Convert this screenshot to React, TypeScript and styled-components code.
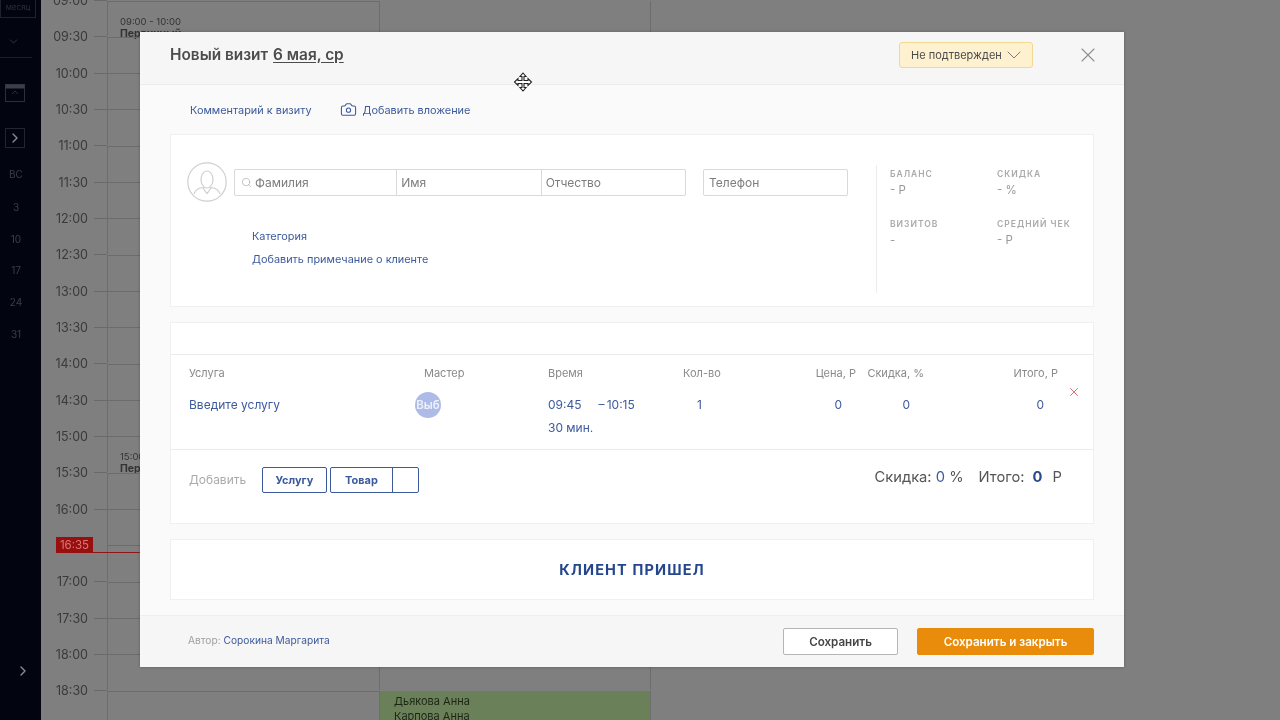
import React from "react";
import styled, { createGlobalStyle } from "styled-components";
import { Camera, ChevronDown, ChevronRight, Search, X } from "lucide-react";

const FONT = `"Inter", "Noto Sans", "Liberation Sans", sans-serif`;
const BLUE = "#3d5a9c";

const GlobalStyle = createGlobalStyle`
    html, body {
        margin: 0;
        padding: 0;
        height: 100%;
        background: #7f7f7f;
    }
    * {
        box-sizing: border-box;
    }
`;

const Page = styled.div`
    position: relative;
    display: flex;
    width: 1280px;
    height: 720px;
    overflow: hidden;
    background: #7f7f7f;
    font-family: ${FONT};
    filter: blur(0.35px);
`;

/* dimmed sidebar */
const Sidebar = styled.aside`
    width: 41px;
    flex: none;
    height: 100%;
    display: flex;
    flex-direction: column;
    align-items: center;
    padding-right: 9px;
    background: #02040f;
    color: #3c3f49;
    font-size: 10px;
`;

const ViewBox = styled.div`
    width: 36px;
    height: 18px;
    flex: none;
    align-self: flex-start;
    border: 1px solid #1f222c;
    border-top: none;
    font-size: 8px;
    line-height: 14px;
    text-align: center;
    color: #2c2f39;
`;

const ViewToggle = styled.div`
    width: 32px;
    height: 40px;
    flex: none;
    display: flex;
    justify-content: center;
    padding: 17px 6px 0 0;
    border-bottom: 1px solid #1c1f29;
    color: #3c3f49;
`;

const CalendarGlyph = styled.svg`
    width: 20px;
    height: 18px;
    flex: none;
    margin: 26px 3px 0 0;
`;

const IconBox = styled.div`
    width: 20px;
    height: 20px;
    flex: none;
    margin: 26px 3px 0 0;
    display: flex;
    align-items: center;
    justify-content: center;
    border: 1px solid #23262f;
    color: #8a8c93;
`;

const DayLabel = styled.div<{ $top: number }>`
    height: 14px;
    line-height: 14px;
    margin-top: ${(p) => p.$top}px;
`;

const SidebarFoot = styled.div`
    margin-top: auto;
    margin-left: 14px;
    padding-bottom: 41px;
    height: 57px;
    color: #8a8c93;
`;

/* dimmed calendar behind the modal */
const CalendarGrid = styled.main`
    flex: 1;
    height: 100%;
`;

const Row = styled.div`
    display: grid;
    grid-template-columns: 66px 272px 272px;
    height: 36.33px;
    padding-top: 0.5px;
`;

const TimeCell = styled.div`
    position: relative;
`;

const TimeLabel = styled.div`
    display: flex;
    align-items: center;
    justify-content: flex-end;
    gap: 6px;
    height: 16px;
    transform: translateY(-50%);
    font-size: 12.5px;
    color: #3a3a3a;

    &::after {
        content: "";
        width: 13px;
        height: 1px;
        background: #696969;
    }
`;

const Cell = styled.div<{ $lined?: boolean }>`
    position: relative;
    border-left: 1px solid #6c6c6c;
    border-top: ${(p) => (p.$lined ? "1px solid #6c6c6c" : "none")};
`;

const LastCell = styled(Cell)`
    border-right: 1px solid #6c6c6c;
`;

const NowBadge = styled.div`
    position: absolute;
    left: 15px;
    top: -8px;
    width: 37px;
    height: 16px;
    display: flex;
    align-items: center;
    justify-content: center;
    background: #980f0f;
    color: #d77;
    font-size: 11.5px;
    z-index: 2;
`;

const NowLine = styled.div`
    position: absolute;
    left: 52px;
    top: 6.5px;
    width: 47px;
    height: 1px;
    background: #8f1616;
    z-index: 2;
`;

const EventBlock = styled.div`
    position: absolute;
    left: 12px;
    top: 14px;
    color: #333;
    font-size: 9.5px;
    line-height: 12px;

    b {
        display: block;
        font-size: 10.5px;
    }
`;

const GreenEvent = styled.div`
    position: absolute;
    left: 0;
    right: 0;
    top: 0;
    height: 36px;
    padding: 3px 14px;
    background: #6a8059;
    color: #1d2615;
    font-size: 11px;
    line-height: 15px;
`;

/* modal */
const Modal = styled.section`
    position: absolute;
    left: 140px;
    top: 32px;
    width: 984px;
    height: 635px;
    display: flex;
    flex-direction: column;
    background: #fafafa;
    box-shadow: 0 0 3px rgba(0, 0, 0, 0.25);
`;

const Header = styled.header`
    height: 53px;
    flex: none;
    display: flex;
    align-items: center;
    padding: 0 24px 7px 30px;
    background: #f6f6f6;
    border-bottom: 1px solid #ececec;
`;

const Title = styled.h2`
    margin: 0;
    flex: 1;
    font-size: 15.4px;
    font-weight: 600;
    color: #4c4c4c;

    u {
        margin-left: 1px;
        text-underline-offset: 2px;
    }
`;

const StatusButton = styled.button`
    width: 134px;
    height: 26px;
    margin-right: 43px;
    padding: 0 6px 0 11px;
    display: flex;
    align-items: center;
    justify-content: space-between;
    white-space: nowrap;
    background: #fdf1d0;
    border: 1px solid #f3d891;
    border-radius: 3px;
    font-family: inherit;
    font-size: 11px;
    color: #4b4b4b;
`;

const CloseButton = styled.div`
    display: flex;
    color: #8f8f8f;
`;

const Body = styled.div`
    flex: 1;
    padding: 0 30px;
`;

const LinksBar = styled.div`
    height: 49px;
    display: flex;
    align-items: center;
    gap: 28px;
    padding-left: 20px;
`;

const TextLink = styled.a`
    display: inline-flex;
    align-items: center;
    gap: 6px;
    font-size: 10.9px;
    color: ${BLUE};
`;

const Card = styled.div<{ $height: number }>`
    height: ${(p) => p.$height}px;
    margin-bottom: 15px;
    background: #fff;
    border: 1px solid #f0f0f0;
`;

const ClientCard = styled(Card)`
    display: flex;
`;

const ClientMain = styled.div`
    width: 705px;
    padding: 27px 0 0 16px;
`;

const ClientRow = styled.div`
    display: flex;
    align-items: center;
    gap: 7px;
`;

const Avatar = styled.svg`
    width: 40px;
    height: 40px;
    flex: none;
`;

const InputGroup = styled.div`
    display: flex;
    width: 452px;
    height: 27px;
    border: 1px solid #d9d9d9;
    border-radius: 2px;
`;

const Field = styled.div<{ $width: number }>`
    width: ${(p) => p.$width}px;
    display: flex;
    align-items: center;
    gap: 3px;
    padding-left: 4px;
    color: #aaa;

    & + & {
        border-left: 1px solid #d9d9d9;
    }
`;

const SearchGlyph = styled(Search)`
    flex: none;
    margin-left: 2px;
`;

const FieldInput = styled.input`
    width: 100%;
    min-width: 0;
    padding: 0;
    border: none;
    outline: none;
    background: transparent;
    font-family: inherit;
    font-size: 12px;

    &::placeholder {
        color: #7d7d7d;
        opacity: 1;
    }
`;

const PhoneField = styled.div`
    width: 145px;
    height: 27px;
    margin-left: 10px;
    display: flex;
    align-items: center;
    padding-left: 5px;
    border: 1px solid #d9d9d9;
    border-radius: 2px;
`;

const ClientLinks = styled.div`
    display: flex;
    flex-direction: column;
    gap: 9px;
    margin: 27px 0 0 65px;
    align-items: flex-start;
`;

const Stats = styled.div`
    width: 190px;
    height: 128px;
    margin-top: 30px;
    padding: 2px 0 0 13px;
    display: grid;
    grid-template-columns: 107px 1fr;
    grid-auto-rows: 50px;
    border-left: 1px solid #ececec;
`;

const StatLabel = styled.div`
    font-size: 8.5px;
    font-weight: 600;
    letter-spacing: 1px;
    line-height: 14px;
    white-space: nowrap;
    color: #aaa;
`;

const StatValue = styled.div`
    font-size: 11.5px;
    line-height: 18px;
    color: #999;
`;

const ServiceBand = styled.div`
    height: 32px;
    border-bottom: 1px solid #ececec;
`;

const ServiceGrid = styled.div`
    display: grid;
    grid-template-columns: 235px 124px 135px 37px 136px 68px 134px 1fr;
    height: 95px;
    padding: 10px 0 0 18px;
    grid-template-rows: 16px 1fr;
    row-gap: 12px;
    border-bottom: 1px solid #ececec;
`;

const HeadCell = styled.div<{ $align?: string }>`
    font-size: 11px;
    line-height: 16px;
    white-space: nowrap;
    color: #8a8a8a;
    text-align: ${(p) => p.$align || "left"};
`;

const ValueCell = styled.div<{ $align?: string; $pad?: number }>`
    font-size: 12px;
    line-height: 23px;
    color: ${BLUE};
    text-align: ${(p) => p.$align || "left"};
    padding-right: ${(p) => p.$pad || 0}px;
`;

const MasterCell = styled.div`
    margin: -1px 0 0 -9px;
`;

const MasterBadge = styled.div`
    width: 26px;
    height: 26px;
    display: flex;
    align-items: center;
    justify-content: center;
    overflow: hidden;
    white-space: nowrap;
    border-radius: 50%;
    background: #aebbe6;
    color: #eef1fb;
    font-size: 11.5px;
    font-weight: 600;
`;

const EndTime = styled.span`
    margin-left: 17px;
`;

const RemoveCell = styled.div`
    position: relative;
    top: -13px;
    padding-left: 9px;
    height: 23px;
    display: flex;
    align-items: center;
    color: #d4545c;
`;

const AddRow = styled.div`
    height: 60px;
    display: flex;
    align-items: center;
    padding: 0 31px 0 18px;
`;

const AddLabel = styled.div`
    width: 73px;
    padding-bottom: 2px;
    font-size: 12px;
    color: #aaa;
`;

const AddButton = styled.div<{ $width: number; $gap?: number }>`
    width: ${(p) => p.$width}px;
    height: 26px;
    margin-right: ${(p) => p.$gap || 0}px;
    display: flex;
    align-items: center;
    justify-content: center;
    border: 1px solid ${BLUE};
    border-radius: 2px;
    font-size: 11px;
    font-weight: 700;
    color: ${BLUE};
`;

const SplitPart = styled.div<{ $width?: number }>`
    flex: ${(p) => (p.$width ? `0 0 ${p.$width}px` : "1")};
    height: 100%;
    display: flex;
    align-items: center;
    justify-content: center;

    & + & {
        border-left: 1px solid ${BLUE};
    }
`;

const Totals = styled.div`
    margin-left: auto;
    margin-bottom: 7px;
    display: flex;
    gap: 15px;
    font-size: 14.7px;
    color: #555;

    b {
        margin: 0 6px 0 4px;
        font-weight: 700;
        color: #2a4a8a;
    }

    span span {
        color: ${BLUE};
    }
`;

const ArrivedCard = styled(Card)`
    display: flex;
    align-items: center;
    justify-content: center;
    font-size: 14.5px;
    font-weight: 700;
    letter-spacing: 1.15px;
    color: #23468c;
`;

const Footer = styled.footer`
    height: 52px;
    flex: none;
    display: flex;
    align-items: center;
    padding: 0 30px 0 48px;
    background: #f6f6f6;
    border-top: 1px solid #efefef;
`;

const Author = styled.div`
    flex: 1;
    padding-bottom: 4px;
    font-size: 10.2px;
    color: #a0a0a0;

    a {
        color: ${BLUE};
    }
`;

const SaveButton = styled.button<{ $primary?: boolean }>`
    width: ${(p) => (p.$primary ? 177 : 115)}px;
    height: 27px;
    margin-left: ${(p) => (p.$primary ? 19 : 0)}px;
    border: 1px solid ${(p) => (p.$primary ? "#e98c0b" : "#b5b5b5")};
    border-radius: 2px;
    background: ${(p) => (p.$primary ? "#e98c0b" : "#fff")};
    color: ${(p) => (p.$primary ? "#fff" : "#444")};
    font-family: inherit;
    font-size: 11.6px;
    font-weight: 600;
`;

const Cursor = styled.svg`
    position: absolute;
    left: 513px;
    top: 72px;
    width: 20px;
    height: 20px;
`;

function timeLabels(): string[] {
    const out: string[] = [];
    for (let h = 9; h <= 18; h++) {
        out.push(`${String(h).padStart(2, "0")}:00`, `${String(h).padStart(2, "0")}:30`);
    }
    return out;
}

function CalendarRow({ time }: { time: string }) {
    const isNow = time === "16:30";
    return (
        <Row>
            <TimeCell>
                {isNow ? (
                    <>
                        <NowBadge>16:35</NowBadge>
                        <NowLine />
                    </>
                ) : (
                    <TimeLabel>{time}</TimeLabel>
                )}
            </TimeCell>
            <Cell $lined>
                {time === "09:00" && (
                    <EventBlock>
                        09:00 - 10:00<b>Первичный</b>
                    </EventBlock>
                )}
                {time === "15:00" && (
                    <EventBlock>
                        15:00 - 16:00<b>Первичный</b>
                    </EventBlock>
                )}
            </Cell>
            <LastCell>
                {time === "18:30" && (
                    <GreenEvent>
                        Дьякова Анна
                        <br />
                        Карпова Анна
                    </GreenEvent>
                )}
            </LastCell>
        </Row>
    );
}

export default function App() {
    return (
        <Page>
            <GlobalStyle />
            <Sidebar>
                <ViewBox>месяц</ViewBox>
                <ViewToggle>
                    <ChevronDown size={13} strokeWidth={1.5} />
                </ViewToggle>
                <CalendarGlyph viewBox="0 0 20 18" fill="none">
                    <rect x="0.5" y="0.5" width="19" height="17" stroke="#2c2f39" />
                    <rect x="0.5" y="0.5" width="19" height="4" fill="#3c3f49" />
                    <path d="M7 10l3-3 3 3" stroke="#2c2f39" />
                </CalendarGlyph>
                <IconBox>
                    <ChevronRight size={16} strokeWidth={2} />
                </IconBox>
                <DayLabel $top={19}>ВС</DayLabel>
                <DayLabel $top={19}>3</DayLabel>
                <DayLabel $top={18}>10</DayLabel>
                <DayLabel $top={17}>17</DayLabel>
                <DayLabel $top={18}>24</DayLabel>
                <DayLabel $top={18}>31</DayLabel>
                <SidebarFoot>
                    <ChevronRight size={16} strokeWidth={2} />
                </SidebarFoot>
            </Sidebar>

            <CalendarGrid>
                {timeLabels().map((t) => (
                    <CalendarRow key={t} time={t} />
                ))}
            </CalendarGrid>

            <Modal>
                <Header>
                    <Title>
                        Новый визит <u>6 мая, ср</u>
                    </Title>
                    <StatusButton>
                        Не подтвержден
                        <ChevronDown size={24} strokeWidth={0.7} />
                    </StatusButton>
                    <CloseButton>
                        <X size={24} strokeWidth={1.1} />
                    </CloseButton>
                </Header>

                <Body>
                    <LinksBar>
                        <TextLink>Комментарий к визиту</TextLink>
                        <TextLink>
                            <Camera size={17} strokeWidth={1.5} />
                            Добавить вложение
                        </TextLink>
                    </LinksBar>

                    <ClientCard $height={173}>
                        <ClientMain>
                            <ClientRow>
                                <Avatar viewBox="0 0 40 40" fill="none" stroke="#cfcfcf" strokeWidth="1.2">
                                    <circle cx="20" cy="20" r="19.2" />
                                    <ellipse cx="20" cy="17.500" rx="6" ry="8.500" />
                                    <path d="M7 32c1-4 5-6 9-6.500 1 2 2.500 4.500 4 6 1.500-1.500 3-4 4-6 4 .5 8 2.500 9 6.500" />
                                </Avatar>
                                <InputGroup>
                                    <Field $width={162}>
                                        <SearchGlyph size={11} strokeWidth={1.5} />
                                        <FieldInput placeholder="Фамилия" />
                                    </Field>
                                    <Field $width={145}>
                                        <FieldInput placeholder="Имя" />
                                    </Field>
                                    <Field $width={145}>
                                        <FieldInput placeholder="Отчество" />
                                    </Field>
                                </InputGroup>
                                <PhoneField>
                                    <FieldInput placeholder="Телефон" />
                                </PhoneField>
                            </ClientRow>
                            <ClientLinks>
                                <TextLink>Категория</TextLink>
                                <TextLink>Добавить примечание о клиенте</TextLink>
                            </ClientLinks>
                        </ClientMain>
                        <Stats>
                            <div>
                                <StatLabel>БАЛАНС</StatLabel>
                                <StatValue>- Р</StatValue>
                            </div>
                            <div>
                                <StatLabel>СКИДКА</StatLabel>
                                <StatValue>- %</StatValue>
                            </div>
                            <div>
                                <StatLabel>ВИЗИТОВ</StatLabel>
                                <StatValue>-</StatValue>
                            </div>
                            <div>
                                <StatLabel>СРЕДНИЙ ЧЕК</StatLabel>
                                <StatValue>- Р</StatValue>
                            </div>
                        </Stats>
                    </ClientCard>

                    <Card $height={202}>
                        <ServiceBand />
                        <ServiceGrid>
                            <HeadCell>Услуга</HeadCell>
                            <HeadCell>Мастер</HeadCell>
                            <HeadCell>Время</HeadCell>
                            <HeadCell $align="center">Кол-во</HeadCell>
                            <HeadCell $align="right">Цена, Р</HeadCell>
                            <HeadCell $align="right">Скидка, %</HeadCell>
                            <HeadCell $align="right">Итого, Р</HeadCell>
                            <div />
                            <ValueCell>Введите услугу</ValueCell>
                            <MasterCell>
                                <MasterBadge>Выб</MasterBadge>
                            </MasterCell>
                            <ValueCell>
                                09:45<EndTime>–&#8201;10:15</EndTime>
                                <br />
                                30 мин.
                            </ValueCell>
                            <ValueCell $align="center" $pad={4}>
                                1
                            </ValueCell>
                            <ValueCell $align="right" $pad={14}>
                                0
                            </ValueCell>
                            <ValueCell $align="right" $pad={14}>
                                0
                            </ValueCell>
                            <ValueCell $align="right" $pad={14}>
                                0
                            </ValueCell>
                            <RemoveCell>
                                <X size={14} strokeWidth={1.4} />
                            </RemoveCell>
                        </ServiceGrid>
                        <AddRow>
                            <AddLabel>Добавить</AddLabel>
                            <AddButton $width={65} $gap={3}>
                                Услугу
                            </AddButton>
                            <AddButton $width={89}>
                                <SplitPart $width={61}>Товар</SplitPart>
                                <SplitPart />
                            </AddButton>
                            <Totals>
                                <span>
                                    Скидка: <span>0</span> %
                                </span>
                                <span>
                                    Итого: <b>0</b> Р
                                </span>
                            </Totals>
                        </AddRow>
                    </Card>

                    <ArrivedCard $height={61}>КЛИЕНТ ПРИШЕЛ</ArrivedCard>
                </Body>

                <Footer>
                    <Author>
                        Автор: <a>Сорокина Маргарита</a>
                    </Author>
                    <SaveButton>Сохранить</SaveButton>
                    <SaveButton $primary>Сохранить и закрыть</SaveButton>
                </Footer>
            </Modal>

            <Cursor viewBox="0 0 20 20">
                <path
                    d="M10 1l3 3.500h-2v4h4v-2l3.500 3.500-3.500 3.500v-2h-4v4h2L10 19l-3-3.500h2v-4H5v2L1.500 10 5 6.500v2h4v-4H7z"
                    fill="#fff"
                    stroke="#222"
                    strokeWidth="1.1"
                />
            </Cursor>
        </Page>
    );
}
